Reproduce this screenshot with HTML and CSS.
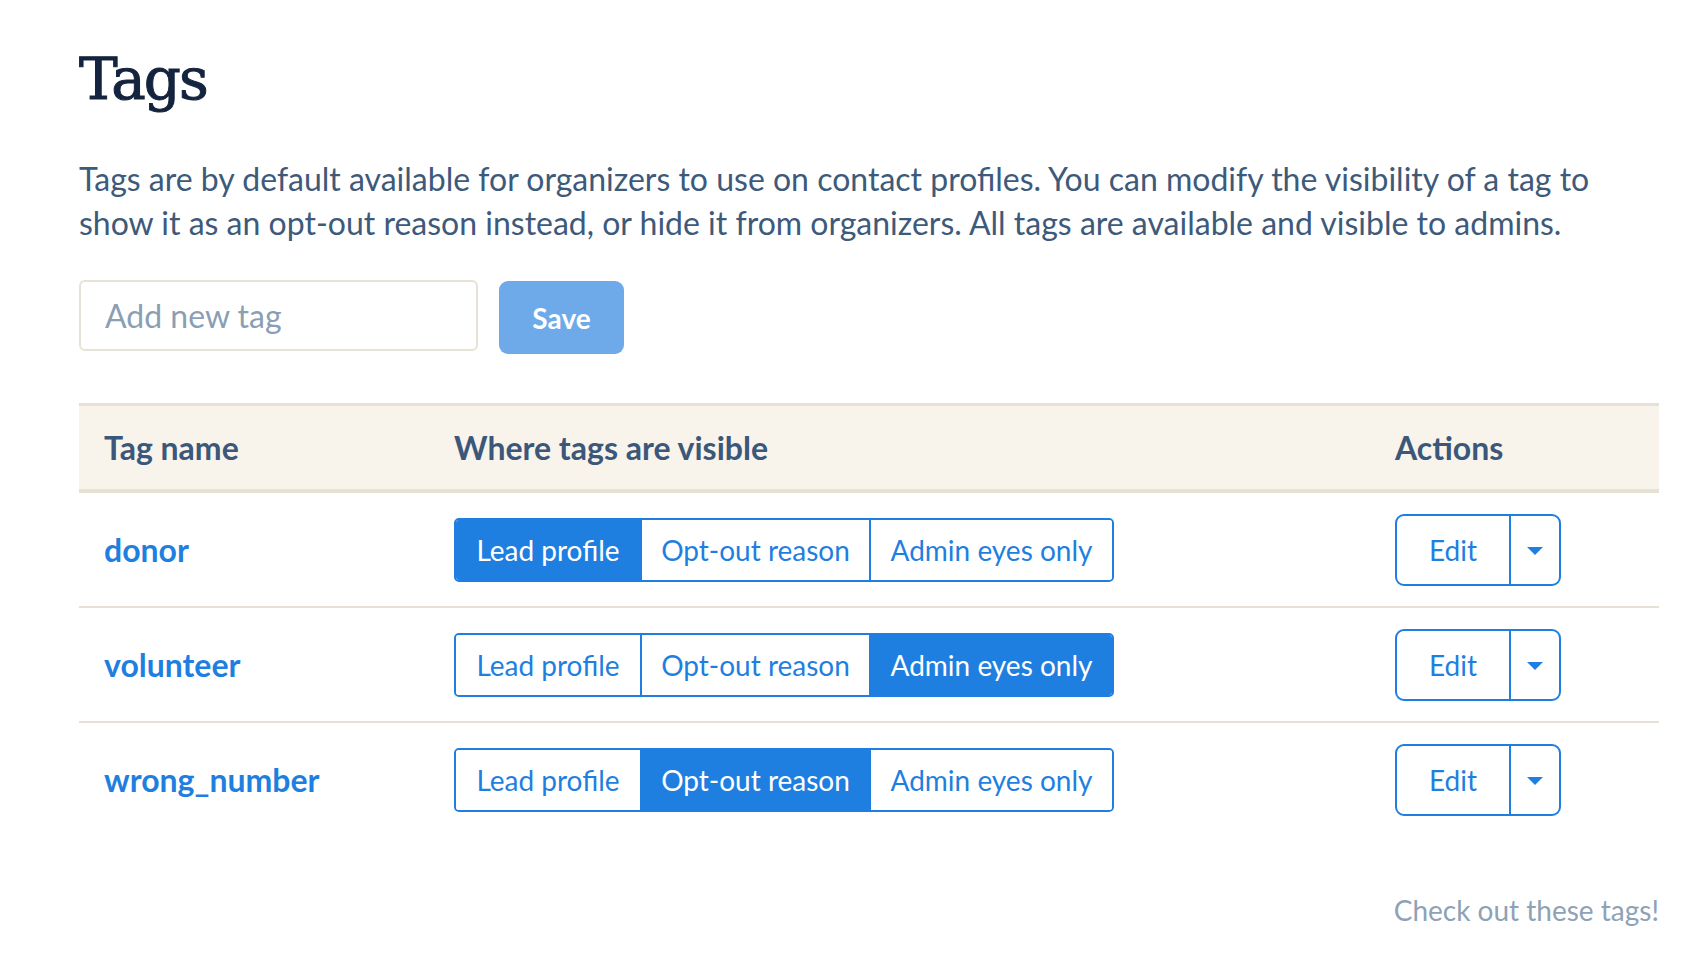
FILE: index.html
```html
<!DOCTYPE html>
<html lang="en">
<head>
<meta charset="utf-8">
<title>Tags</title>
<link rel="stylesheet" href="styles.css">
</head>
<body>
<main class="page">
  <h1 class="title">Tags</h1>
  <p class="intro">Tags are by default available for organizers to use on contact profiles. You can modify the visibility of a tag to show it as an opt-out reason instead, or hide it from organizers. All tags are available and visible to admins.</p>

  <form class="add-form">
    <input class="tag-input" type="text" placeholder="Add new tag">
    <button class="save-btn" type="button">Save</button>
  </form>

  <table class="tags-table">
    <thead>
      <tr>
        <th class="col-name">Tag name</th>
        <th class="col-vis">Where tags are visible</th>
        <th class="col-actions">Actions</th>
      </tr>
    </thead>
    <tbody>
      <tr>
        <td class="tag-name">donor</td>
        <td>
          <div class="seg-group">
            <span class="seg seg-lead active">Lead profile</span><span class="seg seg-opt">Opt-out reason</span><span class="seg seg-admin">Admin eyes only</span>
          </div>
        </td>
        <td>
          <div class="split-btn">
            <span class="split-main">Edit</span><span class="split-caret"><svg width="16" height="8" viewBox="0 0 16 8"><path d="M0 0H16L8 8Z" fill="#1f7fe0"/></svg></span>
          </div>
        </td>
      </tr>
      <tr>
        <td class="tag-name">volunteer</td>
        <td>
          <div class="seg-group">
            <span class="seg seg-lead">Lead profile</span><span class="seg seg-opt">Opt-out reason</span><span class="seg seg-admin active">Admin eyes only</span>
          </div>
        </td>
        <td>
          <div class="split-btn">
            <span class="split-main">Edit</span><span class="split-caret"><svg width="16" height="8" viewBox="0 0 16 8"><path d="M0 0H16L8 8Z" fill="#1f7fe0"/></svg></span>
          </div>
        </td>
      </tr>
      <tr>
        <td class="tag-name">wrong_number</td>
        <td>
          <div class="seg-group">
            <span class="seg seg-lead">Lead profile</span><span class="seg seg-opt active">Opt-out reason</span><span class="seg seg-admin">Admin eyes only</span>
          </div>
        </td>
        <td>
          <div class="split-btn">
            <span class="split-main">Edit</span><span class="split-caret"><svg width="16" height="8" viewBox="0 0 16 8"><path d="M0 0H16L8 8Z" fill="#1f7fe0"/></svg></span>
          </div>
        </td>
      </tr>
    </tbody>
  </table>

  <p class="footnote">Check out these tags!</p>
</main>
</body>
</html>
```

FILE: styles.css
```css
html, body {
  margin: 0;
  padding: 0;
  background: #ffffff;
}

body {
  font-family: Lato, "Noto Sans", "Liberation Sans", sans-serif;
  color: #3b5779;
}

.page {
  width: 1580px;
  padding: 46px 0 0 79px;
}

.title {
  margin: 0;
  font-family: "DejaVu Serif", "Liberation Serif", serif;
  font-weight: normal;
  font-size: 58px;
  line-height: 66px;
  letter-spacing: -2px;
  color: #14233e;
  -webkit-text-stroke: 1px #14233e;
}

.intro {
  margin: 45px 0 0;
  font-size: 32px;
  line-height: 44px;
  color: #3d5a7b;
}

.add-form {
  display: flex;
  align-items: flex-start;
  gap: 21px;
  margin-top: 35px;
}

.tag-input {
  box-sizing: border-box;
  width: 399px;
  height: 71px;
  padding: 0 0 0 24px;
  border: 2px solid #e7e2d6;
  border-radius: 6px;
  font-family: Lato, "Noto Sans", sans-serif;
  font-size: 32px;
  color: #3d5a7b;
  outline: none;
}

.tag-input::placeholder {
  color: #8a9fb4;
}

.save-btn {
  box-sizing: border-box;
  width: 125px;
  height: 73px;
  margin-top: 1px;
  border: none;
  border-radius: 9px;
  background: #6eaaea;
  color: #ffffff;
  font-family: Lato, "Noto Sans", sans-serif;
  font-weight: bold;
  font-size: 28px;
}

.tags-table {
  width: 1580px;
  margin-top: 49px;
  border-collapse: collapse;
  border-spacing: 0;
}

.tags-table th {
  height: 83px;
  padding: 0 0 0 25px;
  background: #f8f4ec;
  border-top: 3px solid #e6e1d4;
  border-bottom: 4px solid #e6e1d4;
  text-align: left;
  font-size: 32px;
  font-weight: bold;
  color: #3b5779;
  vertical-align: middle;
}

.col-name { width: 325px; }
.col-vis { width: 916px; }

.tags-table td {
  height: 113px;
  padding: 0 0 0 25px;
  vertical-align: middle;
  border-bottom: 2px solid #e6e1d4;
}

.tags-table tbody tr:last-child td {
  border-bottom: none;
}

.tag-name {
  font-size: 32px;
  font-weight: bold;
  color: #1f7fe0;
}

.seg-group {
  display: inline-flex;
  height: 64px;
  box-sizing: border-box;
  border: 2px solid #1f7fe0;
  border-radius: 5px;
  overflow: hidden;
}

.seg {
  display: flex;
  align-items: center;
  justify-content: center;
  box-sizing: border-box;
  font-size: 28px;
  color: #1f7fe0;
  background: #ffffff;
}

.seg + .seg {
  border-left: 2px solid #1f7fe0;
}

.seg-lead { width: 184px; }
.seg-opt { width: 229px; }
.seg-admin { width: 243px; }

.seg.active {
  background: #1f7fe0;
  color: #ffffff;
}

.split-btn {
  display: inline-flex;
  height: 72px;
  box-sizing: border-box;
  border: 2px solid #1f7fe0;
  border-radius: 9px;
}

.split-main {
  display: flex;
  align-items: center;
  justify-content: center;
  width: 112px;
  font-size: 28px;
  color: #1f7fe0;
}

.split-caret {
  display: flex;
  align-items: center;
  justify-content: center;
  width: 48px;
  border-left: 2px solid #1f7fe0;
}

.split-caret svg {
  display: block;
  margin-top: 2px;
}

.footnote {
  margin: 57px 0 0;
  text-align: right;
  font-size: 28px;
  line-height: 34px;
  color: #8ea2b6;
}
```
